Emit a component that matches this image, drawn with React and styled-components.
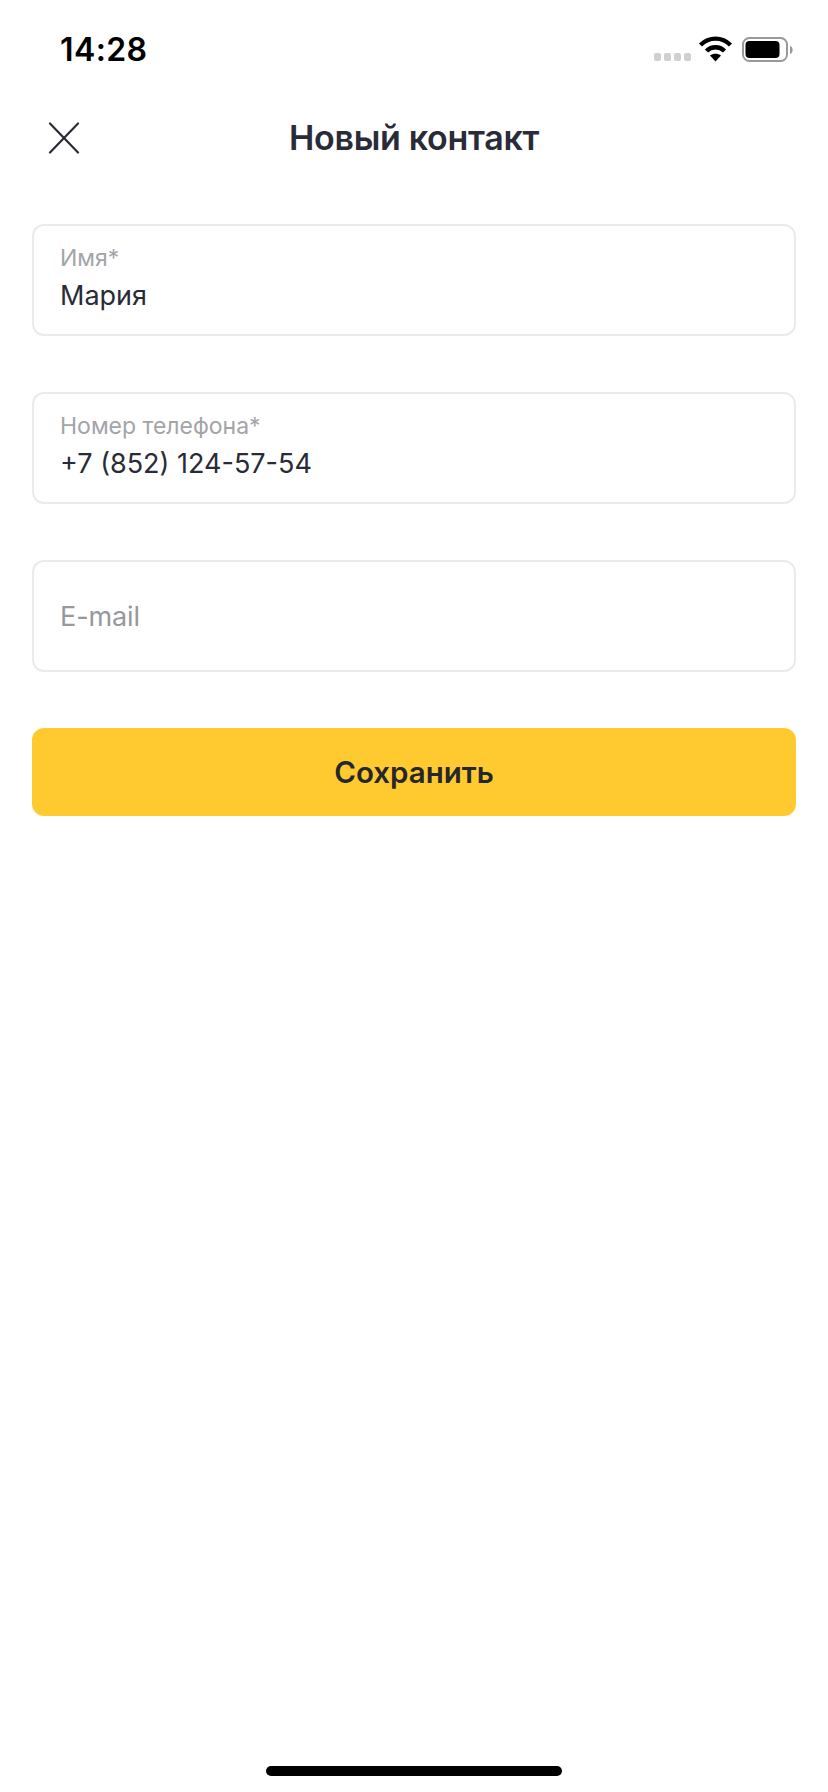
import React from "react";
import styled, { createGlobalStyle } from "styled-components";

const Global = createGlobalStyle`
  html, body { margin: 0; padding: 0; background: #fff; }
  body { font-family: Inter, "Noto Sans", sans-serif; }
`;

const Screen = styled.div`
  position: relative;
  width: 828px;
  height: 1792px;
  background: #fff;
  overflow: hidden;
  display: flex;
  flex-direction: column;
`;

const StatusBar = styled.div`
  height: 98px;
  box-sizing: border-box;
  padding: 32px 32px 0 60px;
  display: flex;
  align-items: flex-start;
  justify-content: space-between;
`;

const Time = styled.span`
  font-size: 32px;
  line-height: 36px;
  font-weight: 600;
  color: #000;
  letter-spacing: 0.4px;
`;

const StatusIcons = styled.svg`
  display: block;
`;

const Header = styled.header`
  position: relative;
  height: 80px;
  display: flex;
  align-items: center;
  justify-content: center;
`;

const Title = styled.h1`
  margin: 0;
  font-size: 34px;
  line-height: 44px;
  font-weight: 600;
  color: #2a2b38;
  letter-spacing: -0.3px;
`;

const CloseButton = styled.button`
  position: absolute;
  left: 48px;
  top: 24px;
  width: 32px;
  height: 32px;
  padding: 0;
  border: 0;
  background: none;
  line-height: 0;
`;

const Form = styled.main`
  padding: 46px 32px 0;
  display: flex;
  flex-direction: column;
  gap: 56px;
`;

const Field = styled.div`
  height: 112px;
  box-sizing: border-box;
  border: 2px solid #ebebed;
  border-radius: 12px;
  padding: ${(p) => (p.$filled ? "0 26px 4px" : "2px 26px 0")};
  display: flex;
  flex-direction: column;
  justify-content: center;
  gap: 7px;
`;

const Label = styled.span`
  font-size: 23px;
  line-height: 28px;
  color: #a3a4a8;
`;

const Value = styled.span`
  font-size: 27px;
  line-height: 34px;
  color: #2a2b38;
`;

const Placeholder = styled.span`
  font-size: 27px;
  line-height: 38px;
  color: #96989c;
  letter-spacing: -0.1px;
`;

const SaveButton = styled.button`
  height: 88px;
  border: 0;
  border-radius: 12px;
  background: #ffca30;
  color: #26272e;
  font-family: inherit;
  font-size: 29.5px;
  font-weight: 600;
`;

const HomeIndicator = styled.div`
  position: absolute;
  left: 266px;
  top: 1766px;
  width: 296px;
  height: 10px;
  border-radius: 5px;
  background: #000;
`;

export default function App() {
  return (
    <Screen>
      <Global />
      <StatusBar>
        <Time>14:28</Time>
        <StatusIcons width="143" height="36" viewBox="0 0 143 36">
          <g fill="#d0d0d0">
            <rect x="1" y="21" width="7" height="8" rx="2" />
            <rect x="11" y="21" width="7" height="8" rx="2" />
            <rect x="21" y="21" width="7" height="8" rx="2" />
            <rect x="31" y="21" width="7" height="8" rx="2" />
          </g>
          <g fill="none" stroke="#000" strokeWidth="4.4">
            <path d="M47.5 13 C56 4.5 69 4.5 77.5 13" />
            <path d="M53.5 19 C58.5 14 66.5 14 71.5 19" />
          </g>
          <path d="M57 23.5 C60 21 65 21 68 23.5 L62.5 29.5 Z" fill="#000" />
          <rect x="90" y="6" width="44" height="23" rx="6.5" fill="none" stroke="#999" strokeWidth="2" />
          <rect x="92.5" y="9" width="34" height="17" rx="4" fill="#000" />
          <path d="M137 14 C140.5 15 140.5 21 137 22 Z" fill="#999" />
        </StatusIcons>
      </StatusBar>
      <Header>
        <CloseButton aria-label="Закрыть">
          <svg width="32" height="32" viewBox="0 0 32 32" fill="none" stroke="#2a2b38" strokeWidth="2.2" strokeLinecap="round">
            <path d="M2 1.5 L30 30.5" />
            <path d="M30 1.5 L2 30.5" />
          </svg>
        </CloseButton>
        <Title>Новый контакт</Title>
      </Header>
      <Form>
        <Field $filled>
          <Label>Имя*</Label>
          <Value>Мария</Value>
        </Field>
        <Field $filled>
          <Label>Номер телефона*</Label>
          <Value>+7 (852) 124-57-54</Value>
        </Field>
        <Field>
          <Placeholder>E-mail</Placeholder>
        </Field>
        <SaveButton>Сохранить</SaveButton>
      </Form>
      <HomeIndicator />
    </Screen>
  );
}
